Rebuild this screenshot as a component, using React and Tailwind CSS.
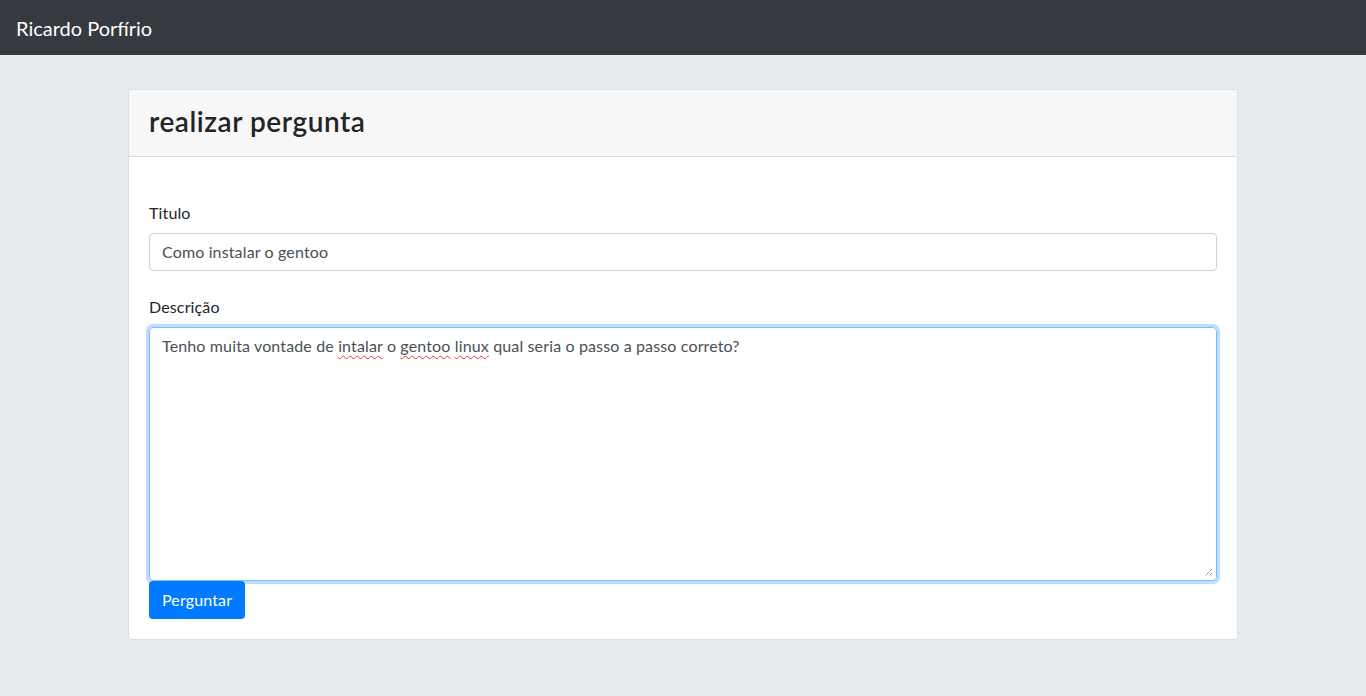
import React from 'react';

const FONT = "font-['Lato','Noto_Sans',sans-serif]";

function ResizeGrip() {
  return (
    <svg className="absolute bottom-[3px] right-[3px]" width="9" height="9" viewBox="0 0 9 9">
      <path d="M8 1 L1 8 M8 5 L5 8" stroke="#555" strokeWidth="1" strokeDasharray="1 1" fill="none" />
    </svg>
  );
}

function Misspelled({ children }) {
  return (
    <span className="underline decoration-wavy decoration-[#e53935] decoration-1 underline-offset-[3px] [text-decoration-skip-ink:none]">
      {children}
    </span>
  );
}

export default function App() {
  return (
    <div className={`min-h-screen bg-[#e9ecef] ${FONT} text-base text-[#212529]`}>
      {/* Navbar */}
      <nav className="h-[55px] bg-[#343a40] px-4 flex items-center">
        <span className="text-xl text-white">Ricardo Porfírio</span>
      </nav>

      {/* Card */}
      <div className="w-[1110px] mx-auto mt-[34px] bg-white border border-black/[.125] rounded">
        <div className="bg-[#f7f7f7] border-b border-black/[.125] px-5 pt-[15px] pb-[9px]">
          <h3 className="text-[28px] leading-[1.2] font-semibold tracking-[0.55px] mb-2">realizar pergunta</h3>
        </div>

        <div className="p-5 tracking-[0.14px]">
          <form className="pt-6" onSubmit={(e) => e.preventDefault()}>
            <div className="mb-6">
              <label className="block leading-6 mb-2">Titulo</label>
              <input
                type="text"
                defaultValue="Como instalar o gentoo"
                className="block w-full h-[38px] px-3 py-1.5 border border-[#ced4da] rounded text-[#495057] outline-none tracking-[0.14px]"
              />
            </div>

            <div>
              <label className="block leading-6 mb-2">Descrição</label>
              <div className="relative h-[254px] px-3 py-1.5 border border-[#80bdff] rounded text-[#495057] leading-6 shadow-[0_0_0_3px_rgba(0,123,255,.25)]">
                Tenho muita vontade de <Misspelled>intalar</Misspelled> o <Misspelled>gentoo</Misspelled>{' '}
                <Misspelled>linux</Misspelled> qual seria o passo a passo correto?
                <ResizeGrip />
              </div>
            </div>

            <button
              type="submit"
              className="relative h-[38px] px-[13px] bg-[#007bff] text-white rounded leading-6 tracking-[0.14px]"
            >
              Perguntar
            </button>
          </form>
        </div>
      </div>
    </div>
  );
}
